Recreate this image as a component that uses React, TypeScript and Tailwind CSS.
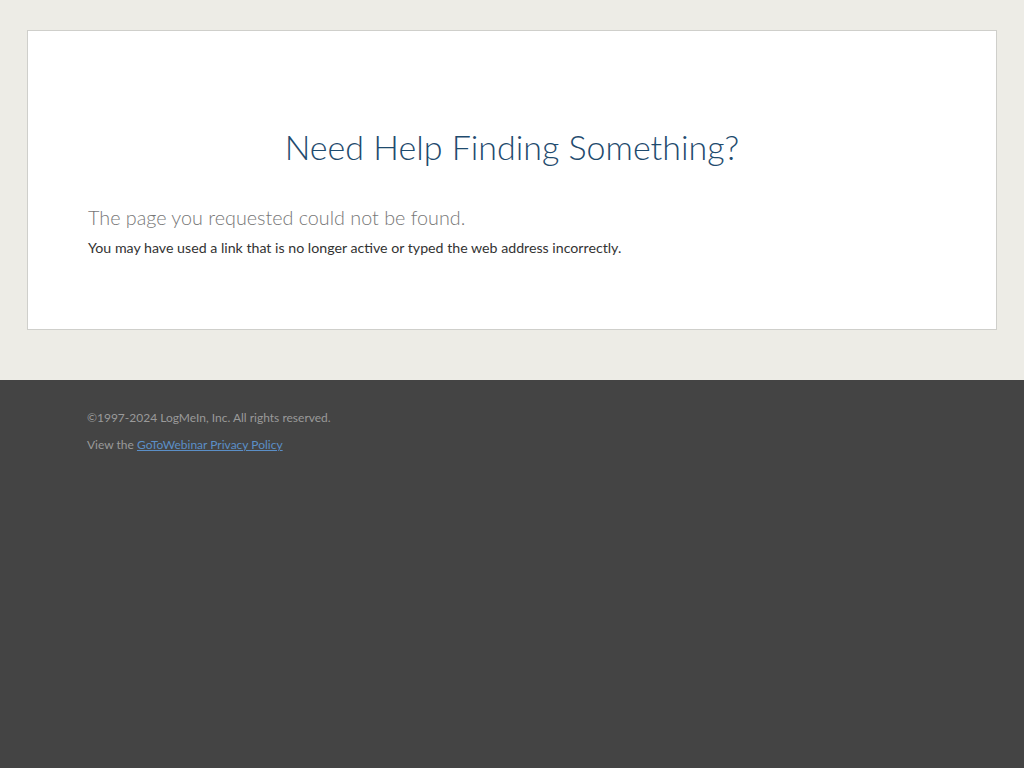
import React from 'react';

export default function App() {
  return (
    <div className="min-h-screen flex flex-col bg-[#edece6] font-['Lato','Liberation_Sans',sans-serif]">
      {/* Main card */}
      <div className="px-[27px] pt-[30px] pb-[50px]">
        <div className="h-[300px] border border-[#cfcfcb] bg-white px-[60px] pt-[96px]">
          <h1 className="text-center text-[34px] font-light leading-[40px] text-[#1f4b6e]">
            Need Help Finding Something?
          </h1>
          <p className="mt-[39px] text-[19.75px] font-light leading-[24px] text-[#777777]">
            The page you requested could not be found.
          </p>
          <p className="mt-[9px] text-[14.2px] leading-[18px] text-[#333333]">
            You may have used a link that is no longer active or typed the web address incorrectly.
          </p>
        </div>
      </div>

      {/* Footer */}
      <footer className="flex-1 bg-[#444444] px-[87px] pt-[30px] text-[12px] leading-[16px] text-[#9a9a9a]">
        <p>©1997-2024 LogMeIn, Inc. All rights reserved.</p>
        <p className="mt-[11px]">
          View the{' '}
          <a href="#" className="text-[#5b8fc7] underline">
            GoToWebinar Privacy Policy
          </a>
        </p>
      </footer>
    </div>
  );
}
